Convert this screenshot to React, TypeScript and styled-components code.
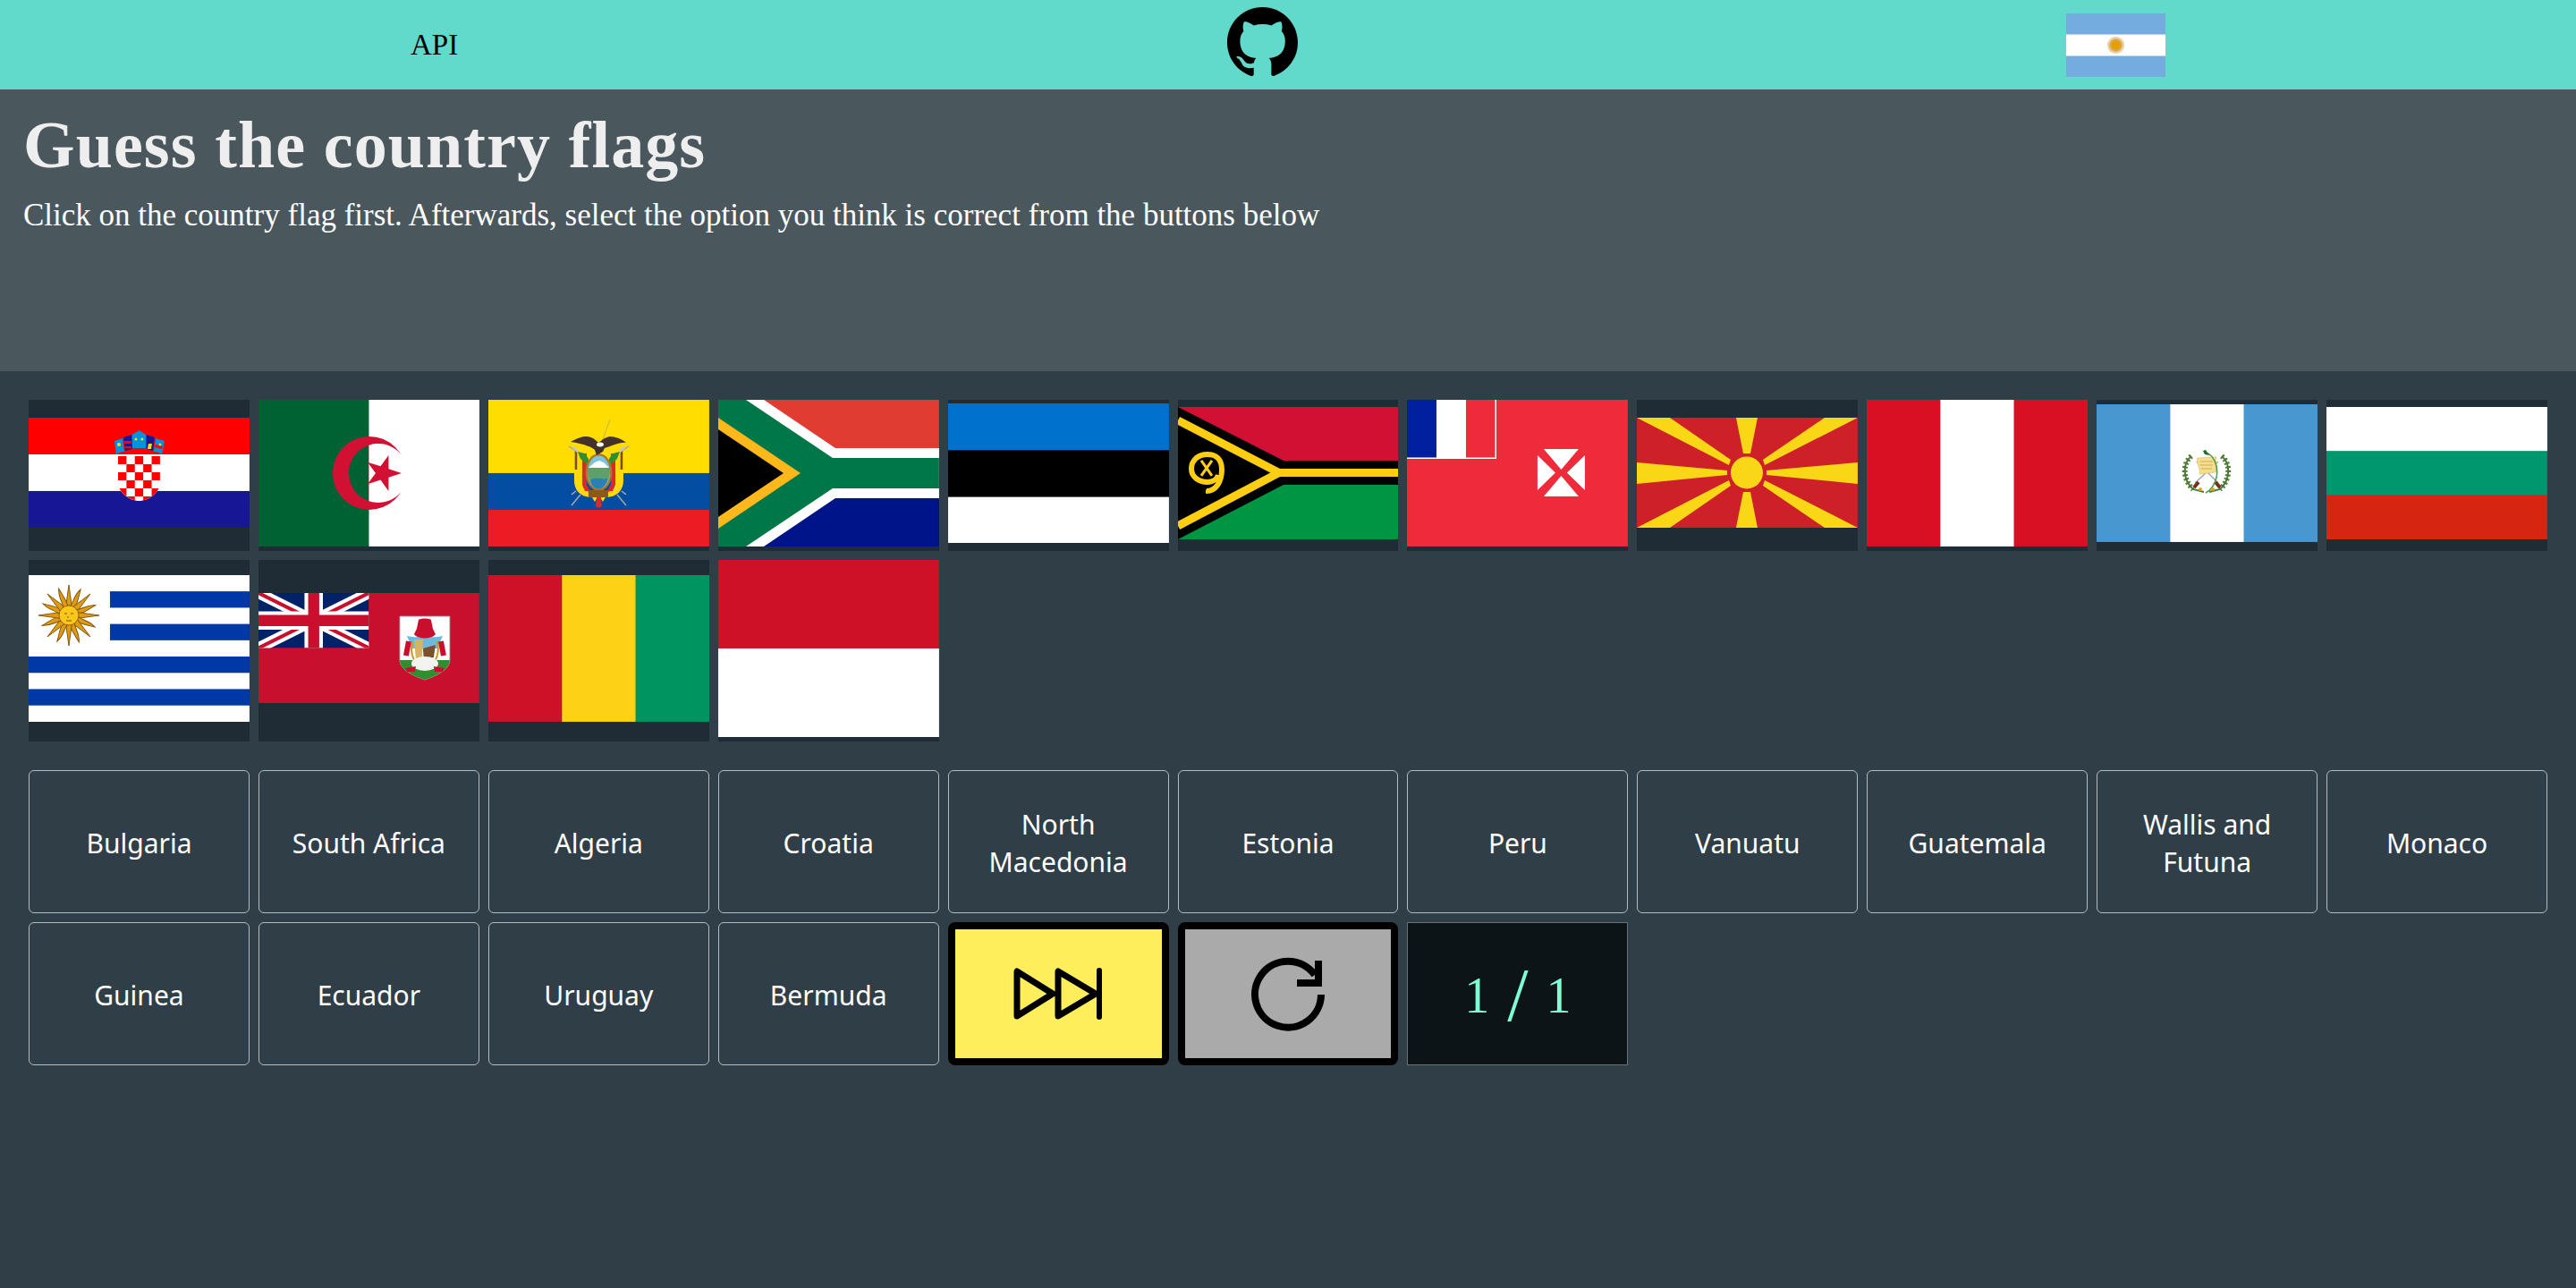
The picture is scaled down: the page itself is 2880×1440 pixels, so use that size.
import React from 'react';
import styled, { createGlobalStyle } from 'styled-components';

const Global = createGlobalStyle`
  html, body { margin: 0; padding: 0; background: #2f3e47; }
  #root { min-height: 1440px; background: #2f3e47; }
  * { box-sizing: border-box; }
`;

const Page = styled.div`
  display: flex;
  flex-direction: column;
  min-height: 1440px;
`;
const TopBar = styled.header`
  height: 100px;
  background: #61d9cb;
  display: flex;
  align-items: center;
  justify-content: space-between;
  padding: 0 459px;
`;
const ApiLink = styled.a`
  font-family: "Liberation Serif", serif;
  font-size: 33px;
  color: #000;
  line-height: 1;
  margin-right: 1px;
`;
const GitHubMark = styled.svg`
  width: 79px;
  height: 79px;
  margin-bottom: 5px;
  display: block;
`;
const LocaleFlag = styled.svg`
  width: 111px;
  height: 71px;
  display: block;
`;
const Hero = styled.section`
  height: 315px;
  background: #4a585e;
  padding: 24px 26px 0;
`;
const Title = styled.h1`
  margin: 0;
  font-family: "Liberation Serif", serif;
  font-weight: 700;
  font-size: 74px;
  line-height: 76px;
  letter-spacing: 1.1px;
  color: #eeeeee;
`;
const Lead = styled.p`
  margin: 19px 0 0;
  font-family: "Liberation Serif", serif;
  font-size: 35px;
  line-height: 44px;
  color: #ffffff;
`;
const Grid = styled.section`
  display: grid;
  grid-template-columns: repeat(11, 1fr);
  gap: 10px;
  padding: 32px 32px 0;
`;
const FlagCell = styled.div`
  background: #1f2c35;
  display: flex;
  align-items: center;
  padding-bottom: 5px;
`;
const FlagArt = styled.svg`
  display: block;
  width: 100%;
  height: auto;
`;
const OptionButton = styled.button`
  height: 160px;
  background: transparent;
  border: 1px solid #b4bcc0;
  border-radius: 6px;
  color: #fff;
  font-family: "Noto Sans", sans-serif;
  font-size: 30px;
  line-height: 42px;
  padding: 5px 16px 0;
  display: flex;
  align-items: center;
  justify-content: center;
  text-align: center;
`;
const ActionButton = styled.button<{ $bg: string }>`
  height: 160px;
  background: ${p => p.$bg};
  border: 8px solid #000;
  border-radius: 8px;
  padding: 0;
  display: flex;
  align-items: center;
  justify-content: center;
`;
const ActionIcon = styled.svg<{ $w: number; $h: number }>`
  width: ${p => p.$w}px;
  height: ${p => p.$h}px;
  display: block;
`;
const Score = styled.div`
  height: 160px;
  background: #0d1417;
  border: 1px solid #6a7173;
  padding-top: 5px;
  display: flex;
  align-items: center;
  justify-content: center;
  gap: 20px;
  font-family: "Liberation Serif", serif;
  font-size: 56px;
  color: #7fffd4;
`;
const ScoreSlash = styled.span`
  font-size: 84px;
  line-height: 1;
  font-weight: 400;
`;

const Bars = ({ h, colors }: { h: number; colors: string[] }) => (
  <>
    {colors.map((c, i) => (
      <rect key={i} x={0} y={(h / colors.length) * i} width={247} height={h / colors.length + 0.3} fill={c} />
    ))}
  </>
);
const Cols = ({ h, colors }: { h: number; colors: string[] }) => (
  <>
    {colors.map((c, i) => (
      <rect key={i} x={(247 / colors.length) * i} y={0} width={247 / colors.length + 0.3} height={h} fill={c} />
    ))}
  </>
);

const checker: React.ReactNode[] = [];
for (let r = 0; r < 6; r++) {
  for (let c = 0; c < 5; c++) {
    if ((r + c) % 2 === 0) checker.push(<rect key={`${r}-${c}`} x={100 + c * 9.4} y={43 + r * 9} width={9.4} height={9} fill="#f00" />);
  }
}
const Croatia = (
  <>
    <Bars h={123} colors={['#ff0000', '#ffffff', '#171796']} />
    <path d="M100 41H147V72C147 84 134 93 123.5 93C113 93 100 84 100 72Z" fill="#fff" />
    <clipPath id="hrShield"><path d="M100 41H147V72C147 84 134 93 123.5 93C113 93 100 84 100 72Z" /></clipPath>
    <g clipPath="url(#hrShield)">{checker}</g>
    <path d="M96 26L105 23L107 38C103 38 99 40 98 41Z" fill="#0093dd" />
    <path d="M106 22L115 19L116 35L108 37Z" fill="#171796" />
    <path d="M107 26H115V29H107ZM108 32H115V34H108Z" fill="#f00" />
    <path d="M116 19L123.5 14L131 19L131 34H116Z" fill="#0093dd" />
    <path d="M132 19L141 22L139 37L132 35Z" fill="#171796" />
    <path d="M142 23L152 26L149 41C147 39 143 38 140 38Z" fill="#0093dd" />
    <path d="M142 30L150 32L149 35L141 33Z" fill="#f00" />
    <path d="M134 29L138 29L137 35L133 35Z" fill="#f7db17" />
    <circle cx="120" cy="24" r="1.5" fill="#f7db17" /><circle cx="127" cy="24" r="1.5" fill="#f7db17" />
    <circle cx="101" cy="30" r="2" fill="#f7db17" /><circle cx="147" cy="30" r="1.5" fill="#f7db17" />
  </>
);
const Algeria = (
  <>
    <Cols h={164} colors={['#006233', '#ffffff']} />
    <circle cx="124" cy="82" r="41" fill="#d21034" />
    <path d="M123.5 50.7A33 33 0 0 0 123.5 113.3Z" fill="#006233" />
    <path d="M123.5 50.7A33 33 0 1 1 123.5 113.3Z" fill="#fff" />
    <polygon points="160,82 145.5,86.7 145.5,102 136.5,89.6 122,94.3 131,82 122,69.7 136.5,74.4 145.5,62 145.5,77.3" fill="#d21034" />
  </>
);
const Ecuador = (
  <>
    <rect width="247" height="82" fill="#ffdd00" />
    <rect y="82" width="247" height="41" fill="#034ea2" />
    <rect y="123" width="247" height="41" fill="#ed1c24" />
    <path d="M136 22L126 50" stroke="#c9b24a" strokeWidth="1" />
    <path d="M96 58H105V92C105 100 110 103 116 103V109C102 109 96 100 96 90Z M151 58H142V92C142 100 137 103 131 103V109C145 109 151 100 151 90Z" fill="#ffd80f" />
    <path d="M105 60H110V95L114 102H108L105 94Z M142 60H137V95L133 102H139L142 94Z" fill="#d7292e" />
    <path d="M112 74L103 66L100 58L108 60L112 66Z M135 74L144 66L147 58L139 60L135 66Z" fill="#2f8f2e" />
    <path d="M90 52L99 58M157 52L148 58M103 106L93 118M144 106L154 118M98 102L93 106M149 102L154 106" stroke="#a8a8a0" strokeWidth="1.5" />
    <path d="M98 56V78M149 56V78" stroke="#7a4b22" strokeWidth="2.5" />
    <path d="M95 53L100 58M152 53L147 58" stroke="#c7c7c0" strokeWidth="3" />
    <ellipse cx="123.5" cy="81" rx="15" ry="21" fill="#a9792a" />
    <ellipse cx="123.5" cy="81" rx="12.5" ry="18.5" fill="#7cc4de" />
    <path d="M112 76L119 70L124 68L129 70L135 76Z" fill="#fff" />
    <path d="M111 76H136C136.5 84 134 92 130 96H117C113 92 110.5 84 111 76Z" fill="#5f9f6a" />
    <path d="M114 90C120 85 128 91 133 87C133 93 129 99.5 123.5 99.5C118 99.5 115 95 114 90Z" fill="#2a7fb5" />
    <rect x="112" y="101" width="22" height="8" fill="#8a5a1c" />
    <path d="M116 109L119 114L122 109ZM131 109L128 114L125 109Z" fill="#ffd80f" />
    <path d="M121 109H126L127 119L123.5 121L120 119Z" fill="#d7292e" />
    <path d="M92 47C100 43 104 41 110 41C116 41 120 45 123 48C126 46 130 42 136 41C142 41 150 44 154 48C148 47 142 50 136 52L130 54L128 58L121 62L119 56C116 52 100 48 92 47Z" fill="#44322a" />
    <ellipse cx="125" cy="50" rx="4" ry="2.5" fill="#fff" />
  </>
);
const SouthAfrica = (
  <>
    <rect width="247" height="82" fill="#e03c31" />
    <rect y="82" width="247" height="82" fill="#001489" />
    <polygon points="0,0 51,0 131,54 247,54 247,110 131,110 51,164 0,164" fill="#fff" />
    <polygon points="0,0 31,0 128,65 247,65 247,99 128,99 31,164 0,164" fill="#007749" />
    <polygon points="0,20 92,82 0,144" fill="#ffb81c" />
    <polygon points="0,33 73,82 0,131" fill="#000" />
  </>
);
const Estonia = <Bars h={157} colors={['#0072ce', '#000000', '#ffffff']} />;
const Vanuatu = (
  <>
    <rect width="247" height="74" fill="#d21034" />
    <rect y="74" width="247" height="74" fill="#009543" />
    <polygon points="0,0 118,60 247,60 247,87 118,87 0,148" fill="#000" />
    <path d="M0 15L113 73.5H247M113 73.5L0 133" fill="none" stroke="#fdce12" strokeWidth="9" />
    <path d="M32 94C42 94 49 84 49 70C49 58 42 53 33 53C22 53 15 60 15 69C15 78 23 84 33 84C40 84 44 80 45 76" fill="none" stroke="#fdce12" strokeWidth="6" />
    <path d="M31 92V97L36 95Z" fill="#fdce12" />
    <path d="M26 60L38 77M38 60L26 77" stroke="#fdce12" strokeWidth="3" />
  </>
);
const Wallis = (
  <>
    <rect width="247" height="164" fill="#ef2b3b" />
    <rect width="100" height="66" fill="#fff" />
    <rect width="33" height="64.5" fill="#00209f" />
    <rect x="33" width="33" height="64.5" fill="#fff" />
    <rect x="66" width="32.5" height="64.5" fill="#ef2b3b" />
    <polygon points="153,55 192,55 172.5,78" fill="#fff" />
    <polygon points="153,108 192,108 172.5,85" fill="#fff" />
    <polygon points="146,62 146,101 166,81.5" fill="#fff" />
    <polygon points="199,62 199,101 179,81.5" fill="#fff" />
  </>
);
const Macedonia = (
  <>
    <rect width="247" height="123" fill="#ce2028" />
    <g fill="#f9d616">
      <polygon points="0,0 37,0 105,47 103,53" />
      <polygon points="247,0 210,0 141,47 143,53" />
      <polygon points="0,123 37,123 105,76 103,70" />
      <polygon points="247,123 210,123 141,76 143,70" />
      <polygon points="111,0 135,0 127,40 119,40" />
      <polygon points="111,123 135,123 127,83 119,83" />
      <polygon points="0,50 101,59 101,64 0,74" />
      <polygon points="247,50 145,59 145,64 247,74" />
      <circle cx="123" cy="61.5" r="18" />
    </g>
  </>
);
const Peru = <Cols h={164} colors={['#d91023', '#ffffff', '#d91023']} />;
const Guatemala = (
  <>
    <Cols h={154} colors={['#4997d0', '#ffffff', '#4997d0']} />
    <path d="M106 58C96 66 96 84 108 95L120 98M140 58C150 66 150 84 138 95L126 98" fill="none" stroke="#4b7a34" strokeWidth="2" />
    <path d="M106 58C96 66 96 84 108 95M140 58C150 66 150 84 138 95" fill="none" stroke="#4b7a34" strokeWidth="6" strokeDasharray="2 2.5" />
    <path d="M110 88L136 64M136 88L112 64" stroke="#9aa7b0" strokeWidth="1.5" />
    <path d="M109 93L114 87M138 93L133 87" stroke="#7a2e1c" strokeWidth="4" />
    <path d="M113 60L134 59C132 65 136 70 133 76L115 78C117 72 111 66 113 60Z" fill="#f5de8c" stroke="#d8b95a" strokeWidth="0.6" />
    <path d="M116 64H130M116 68H130M117 72H129" stroke="#b8964a" strokeWidth="0.7" />
    <path d="M122 54C130 56 137 68 134 82C132 90 128 96 122 99" fill="none" stroke="#4a9a44" strokeWidth="1.5" />
    <path d="M119 52L122 51L126 57L121 56Z" fill="#1f6b2c" />
    <circle cx="116" cy="95" r="2" fill="#d9a520" /><circle cx="130" cy="95" r="2" fill="#d9a520" />
  </>
);
const Bulgaria = <Bars h={148} colors={['#ffffff', '#00966e', '#d62612']} />;

const uruguayRays = Array.from({ length: 16 }, (_, i) => i * 22.5);
const Uruguay = (
  <>
    <Bars h={164} colors={['#fff', '#0038a8', '#fff', '#0038a8', '#fff', '#0038a8', '#fff', '#0038a8', '#fff']} />
    <rect width="91" height="91" fill="#fff" />
    <g transform="translate(45 45)">
      {uruguayRays.map(a => (
        <path
          key={a}
          transform={`rotate(${a})`}
          d={a % 45 === 0 ? 'M-3.5 -9L0 -34L3.5 -9Z' : 'M-3 -9C0 -16 -4 -22 1 -32C2 -24 4 -17 3 -9Z'}
          fill="#dd9c14"
          stroke="#7f4f06"
          strokeWidth="0.9"
        />
      ))}
      <circle r="11" fill="#f9c81a" stroke="#7f4f06" strokeWidth="0.8" />
      <path d="M-5 -2H-2M2 -2H5M-1 1V3M-3 6H3" stroke="#7f4f06" strokeWidth="1" />
    </g>
  </>
);
const shieldPath = 'M158 26H214V75C214 86 198 93 186 97C174 93 158 86 158 75Z';
const Bermuda = (
  <>
    <rect width="247" height="123" fill="#c8102e" />
    <svg x="0" y="0" width="123.5" height="61.5" viewBox="0 0 60 30" preserveAspectRatio="none">
      <rect width="60" height="30" fill="#012169" />
      <path d="M0 0L60 30M60 0L0 30" stroke="#fff" strokeWidth="6" />
      <path d="M0 0L60 30M60 0L0 30" stroke="#c8102e" strokeWidth="2" />
      <path d="M30 0V30M0 15H60" stroke="#fff" strokeWidth="10" />
      <path d="M30 0V30M0 15H60" stroke="#c8102e" strokeWidth="6" />
    </svg>
    <path d={shieldPath} fill="#fff" stroke="#9aa0a0" strokeWidth="0.8" />
    <clipPath id="bmShield"><path d={shieldPath} /></clipPath>
    <g clipPath="url(#bmShield)"><rect x="158" y="75" width="56" height="24" fill="#2f8f2e" /></g>
    <path d="M166 48C174 50 198 50 206 48L200 62H172Z" fill="#6fb9dc" />
    <path d="M179 30C181 28 191 28 193 30L195 40L198 46C194 52 178 52 174 46L177 40Z" fill="#c8102e" />
    <path d="M168 54L165 70M204 54L207 70" stroke="#c8102e" strokeWidth="6" />
    <path d="M172 54C170 64 172 74 178 80M200 54C202 64 200 74 194 80" fill="none" stroke="#c79a1e" strokeWidth="2" />
    <path d="M174 52L184 52L183 74L176 74Z" fill="#d5b563" />
    <path d="M184 62L198 58L196 72L185 76Z" fill="#7a4f2c" />
    <ellipse cx="186" cy="79" rx="15" ry="8" fill="#f3f3f0" />
    <path d="M164 84L176 82L175 88H166ZM208 84L196 82L197 88H206Z" fill="#c8102e" />
  </>
);
const Guinea = <Cols h={164} colors={['#ce1126', '#fcd116', '#009460']} />;
const Monaco = <Bars h={198} colors={['#ce1126', '#ffffff']} />;

const flagRows: { name: string; h: number; art: React.ReactNode }[] = [
  { name: 'Croatia', h: 123, art: Croatia },
  { name: 'Algeria', h: 164, art: Algeria },
  { name: 'Ecuador', h: 164, art: Ecuador },
  { name: 'South Africa', h: 164, art: SouthAfrica },
  { name: 'Estonia', h: 157, art: Estonia },
  { name: 'Vanuatu', h: 148, art: Vanuatu },
  { name: 'Wallis and Futuna', h: 164, art: Wallis },
  { name: 'North Macedonia', h: 123, art: Macedonia },
  { name: 'Peru', h: 164, art: Peru },
  { name: 'Guatemala', h: 154, art: Guatemala },
  { name: 'Bulgaria', h: 148, art: Bulgaria },
  { name: 'Uruguay', h: 164, art: Uruguay },
  { name: 'Bermuda', h: 123, art: Bermuda },
  { name: 'Guinea', h: 164, art: Guinea },
  { name: 'Monaco', h: 198, art: Monaco },
];

const options = [
  'Bulgaria', 'South Africa', 'Algeria', 'Croatia', 'North Macedonia', 'Estonia', 'Peru', 'Vanuatu',
  'Guatemala', 'Wallis and Futuna', 'Monaco', 'Guinea', 'Ecuador', 'Uruguay', 'Bermuda',
];

export default function App() {
  return (
    <Page>
      <Global />
      <TopBar>
        <ApiLink>API</ApiLink>
        <GitHubMark viewBox="0 0 16 16" aria-label="GitHub">
          <path
            fill="#000"
            d="M8 0C3.58 0 0 3.58 0 8c0 3.54 2.29 6.53 5.47 7.59.4.07.55-.17.55-.38 0-.19-.01-.82-.01-1.49-2.01.37-2.53-.49-2.69-.94-.09-.23-.48-.94-.82-1.13-.28-.15-.68-.52-.01-.53.63-.01 1.08.58 1.23.82.72 1.21 1.87.87 2.33.66.07-.52.28-.87.51-1.07-1.78-.2-3.64-.89-3.64-3.95 0-.87.31-1.59.82-2.15-.08-.2-.36-1.02.08-2.12 0 0 .67-.21 2.2.82.64-.18 1.32-.27 2-.27s1.36.09 2 .27c1.53-1.04 2.2-.82 2.2-.82.44 1.1.16 1.92.08 2.12.51.56.82 1.27.82 2.15 0 3.07-1.87 3.75-3.65 3.95.29.25.54.73.54 1.48 0 1.07-.01 1.93-.01 2.2 0 .21.15.46.55.38A8.01 8.01 0 0 0 16 8c0-4.42-3.58-8-8-8z"
          />
        </GitHubMark>
        <LocaleFlag viewBox="0 0 111 71" aria-label="Argentina">
          <rect width="111" height="71" fill="#74acdf" />
          <rect y="23.5" width="111" height="24" fill="#fff" />
          <circle cx="55.5" cy="35.5" r="9.5" fill="#e9cf9f" />
          <circle cx="55.5" cy="35.5" r="7" fill="#dca544" />
          <circle cx="55.5" cy="35.5" r="4.5" fill="#e59f00" />
        </LocaleFlag>
      </TopBar>
      <Hero>
        <Title>Guess the country flags</Title>
        <Lead>Click on the country flag first. Afterwards, select the option you think is correct from the buttons below</Lead>
      </Hero>
      <Grid>
        {flagRows.map(f => (
          <FlagCell key={f.name}>
            <FlagArt viewBox={`0 0 247 ${f.h}`} aria-label={f.name}>{f.art}</FlagArt>
          </FlagCell>
        ))}
      </Grid>
      <Grid>
        {options.map(o => (
          <OptionButton key={o}>{o}</OptionButton>
        ))}
        <ActionButton $bg="#ffee5c" aria-label="Skip">
          <ActionIcon $w={100} $h={58} viewBox="0 0 100 58">
            <path d="M4 4V54L44 29ZM50 4V54L92 29Z" fill="none" stroke="#000" strokeWidth="7" strokeLinejoin="round" />
            <path d="M96 3V55" stroke="#000" strokeWidth="6" strokeLinecap="round" />
          </ActionIcon>
        </ActionButton>
        <ActionButton $bg="#aaaaaa" aria-label="Restart">
          <ActionIcon $w={84} $h={86} viewBox="0 0 84 86">
            <path d="M79 44A37 37 0 1 1 72 22" fill="none" stroke="#000" strokeWidth="8" />
            <path d="M80 6V35H52V27H72V6Z" fill="#000" />
          </ActionIcon>
        </ActionButton>
        <Score>
          <span>1</span>
          <ScoreSlash>/</ScoreSlash>
          <span>1</span>
        </Score>
      </Grid>
    </Page>
  );
}
